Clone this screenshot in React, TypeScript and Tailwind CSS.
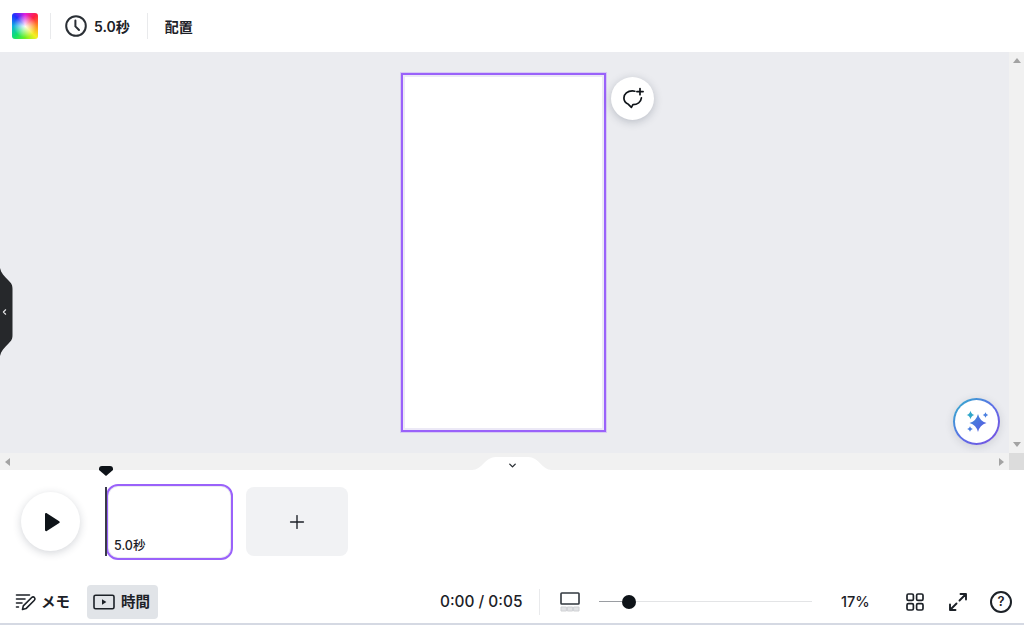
import { ChevronDown, ChevronLeft, Plus } from 'lucide-react';

const FONT = 'font-["Inter","Noto_Sans_CJK_JP",sans-serif]';

function ClockIcon() {
  return (
    <svg width="22" height="22" viewBox="0 0 22 22" fill="none" stroke="#2a2f35" strokeWidth="2" strokeLinecap="round" strokeLinejoin="round">
      <circle cx="11" cy="11" r="9.8" />
      <path d="M10.4 5.4v6l3.6 3.6" />
    </svg>
  );
}

function CommentPlusIcon() {
  return (
    <svg width="24" height="24" viewBox="0 0 24 24" fill="none" stroke="#0e1318" strokeWidth="1.7" strokeLinecap="round" strokeLinejoin="round">
      <path d="M13.8 4.2C13 4 12.2 3.9 11.4 3.9 6.6 3.9 2.9 6.8 2.9 11c0 3 1.9 5.2 4.5 6.3l3 3 1.5-2.6c4.4 0 8-2.6 8.5-6.9" />
      <path d="M19 1.5v6.2M15.9 4.6h6.2" />
    </svg>
  );
}

function SparkleIcon() {
  return (
    <svg width="26" height="26" viewBox="0 0 26 26">
      <defs>
        <linearGradient id="spark" x1="0" y1="0" x2="1" y2="1">
          <stop offset="0" stopColor="#3f8fd8" />
          <stop offset="1" stopColor="#5a55e4" />
        </linearGradient>
      </defs>
      <path fill="url(#spark)" d="M14 5Q15.6 12 22.5 14 15.6 16 14 23 12.4 16 5.5 14 12.4 12 14 5z" />
      <path fill="#2fa6c9" d="M6.5 1.8Q7.2 5.2 10.4 6 7.2 6.8 6.5 10.2 5.8 6.8 2.6 6 5.8 5.2 6.5 1.8z" />
      <path fill="#4a7fe0" d="M21.5 3.2Q22 5.5 24.2 6 22 6.5 21.5 8.8 21 6.5 18.8 6 21 5.5 21.5 3.2z" />
      <path fill="#4a7fe0" d="M6 17.2Q6.5 19.5 8.8 20 6.5 20.5 6 22.8 5.5 20.5 3.2 20 5.5 19.5 6 17.2z" />
    </svg>
  );
}

function NotesIcon() {
  return (
    <svg width="22" height="22" viewBox="0 0 22 22" fill="none" stroke="#1c2127" strokeWidth="1.6" strokeLinecap="round" strokeLinejoin="round">
      <path d="M1.5 4h13M1.5 8h8.5M1.5 12h5.5M1.5 16h2" />
      <path d="M7.5 18.5l.8-3.6 8.4-8.4c.8-.8 2-.8 2.7 0s.8 1.9 0 2.7l-8.4 8.4-3.5.9z" />
    </svg>
  );
}

function TimingIcon() {
  return (
    <svg width="22" height="16" viewBox="0 0 22 16" fill="none">
      <rect x="1" y="1.2" width="20" height="13.6" rx="1.6" stroke="#1c2127" strokeWidth="1.6" />
      <path d="M9 5.3v5.4l4.4-2.7z" fill="#1c2127" />
    </svg>
  );
}

function LayoutIcon() {
  return (
    <svg width="20" height="20" viewBox="0 0 20 20" fill="none">
      <rect x="1" y="1" width="18" height="11" rx="0.8" stroke="#32383f" strokeWidth="1.6" />
      <path d="M1 15h5.4v4H1zM7.4 15h5.2v4H7.4zM13.6 15H19v4h-5.4z" fill="#e3e4e6" stroke="#cfd1d4" strokeWidth="1" />
    </svg>
  );
}

function GridIcon() {
  return (
    <svg width="18" height="18" viewBox="0 0 18 18" fill="none" stroke="#1c2127" strokeWidth="1.7">
      <rect x="1" y="1" width="6.4" height="6.4" rx="1.4" />
      <rect x="10.6" y="1" width="6.4" height="6.4" rx="1.4" />
      <rect x="1" y="10.6" width="6.4" height="6.4" rx="1.4" />
      <rect x="10.6" y="10.6" width="6.4" height="6.4" rx="1.4" />
    </svg>
  );
}

function ExpandIcon() {
  return (
    <svg width="20" height="20" viewBox="0 0 20 20" fill="none" stroke="#1c2127" strokeWidth="1.9" strokeLinecap="round" strokeLinejoin="round">
      <path d="M11.5 8.5L18 2M12.5 2H18v5.5" />
      <path d="M8.5 11.5L2 18M7.5 18H2v-5.5" />
    </svg>
  );
}

function ScrollArrow({ className }: { className: string }) {
  return <div className={`h-0 w-0 ${className}`} />;
}

export default function App() {
  return (
    <div className={`flex h-[625px] w-[1024px] flex-col overflow-hidden bg-white text-[#1c2127] ${FONT}`}>
      {/* top bar */}
      <header className="flex h-[52px] shrink-0 items-center bg-white pl-3">
        <div className="relative h-[26px] w-[26px] overflow-hidden rounded-[3px] bg-[conic-gradient(from_315deg,#2030ff,#e020e0,#ff2040,#ff9020,#f4f020,#70f020,#10e070,#10b0e0,#2030ff)]">
          <div className="h-full w-full bg-[radial-gradient(circle_at_center,rgba(255,255,255,0.95)_0%,rgba(255,255,255,0)_62%)]" />
        </div>
        <div className="ml-[12px] h-[26px] w-px bg-[#e9eaec]" />
        <div className="ml-[14px] flex items-center gap-[7px]">
          <ClockIcon />
          <span className="text-[14px] font-semibold">5.0秒</span>
        </div>
        <div className="ml-[17px] h-[26px] w-px bg-[#e9eaec]" />
        <span className="ml-[17px] text-[14px] font-semibold">配置</span>
      </header>

      {/* canvas + scrollbars */}
      <div className="flex h-[418px] shrink-0">
        <div className="flex w-[1009px] flex-col">
          <main className="relative flex h-[401px] justify-center bg-[#ebecf0] pt-[21px]">
            <div className="mr-[3px] h-[359px] w-[205px] border-[2px] border-[#9a62fa] bg-white shadow-[0_0_0_1px_rgba(154,98,250,0.25),inset_0_0_0_2px_#ece9f6]" />
            <button className="absolute left-[611px] top-[25px] flex h-[43px] w-[43px] items-center justify-center rounded-full bg-white shadow-[0_2px_8px_rgba(40,50,70,0.25)]">
              <CommentPlusIcon />
            </button>
            <div className="absolute left-0 top-[216px] flex h-[88px] w-[13px] items-center justify-end pr-[4px]">
              <svg width="13" height="88" viewBox="0 0 13 88" className="absolute left-0 top-0">
                <path d="M0 0C1 5 4 8 9 13 11.5 15.5 12.5 17 12.5 21V67C12.5 71 11.5 72.5 9 75 4 80 1 83 0 88z" fill="#26282b" />
              </svg>
              <ChevronLeft size={10} strokeWidth={3} color="#e5e6e8" className="relative" />
            </div>
            <button className="absolute left-[953px] top-[346px] flex h-[47px] w-[47px] items-center justify-center rounded-full bg-[linear-gradient(135deg,#2fb5c9,#5b6fe6,#7b4fe0)] p-[2px] shadow-[0_2px_8px_rgba(40,50,70,0.15)]">
              <span className="flex h-full w-full items-center justify-center rounded-full bg-white">
                <SparkleIcon />
              </span>
            </button>
          </main>
          <div className="relative flex h-[17px] items-center justify-between bg-[#f1f1f1] px-[5px]">
            <ScrollArrow className="border-y-[4px] border-r-[5px] border-y-transparent border-r-[#a3a3a3]" />
            <ScrollArrow className="border-y-[4px] border-l-[5px] border-y-transparent border-l-[#a3a3a3]" />
            <div className="absolute bottom-0 left-[472px] flex h-[13px] w-[80px] items-start justify-center">
              <svg width="80" height="13" viewBox="0 0 80 13" className="absolute left-0 top-0">
                <path d="M0 13C10 13 13 0 24 0H56C67 0 70 13 80 13z" fill="#fff" />
              </svg>
              <ChevronDown size={11} strokeWidth={3} color="#2a2f35" className="relative mt-[3px]" />
            </div>
          </div>
        </div>
        <aside className="flex w-[15px] flex-col">
          <div className="flex h-[401px] flex-col items-center justify-between bg-[#f1f1f1] py-[6px]">
            <ScrollArrow className="border-x-[4px] border-b-[5px] border-x-transparent border-b-[#a3a3a3]" />
            <ScrollArrow className="border-x-[4px] border-t-[5px] border-x-transparent border-t-[#a3a3a3]" />
          </div>
          <div className="h-[17px] bg-[#dcdcdc]" />
        </aside>
      </div>

      {/* timeline */}
      <section className="relative flex h-[110px] shrink-0 items-start bg-white pl-[21px]">
        <div className="mt-[22px] flex h-[59px] w-[59px] items-center justify-center rounded-full bg-white shadow-[0_2px_8px_rgba(40,50,70,0.2)]">
          <svg width="18" height="20" viewBox="0 0 18 20" className="ml-[2px]">
            <path d="M2 2.2c0-.9 1-1.5 1.8-1l12.4 8c.7.4.7 1.4 0 1.8l-12.4 8c-.8.5-1.8-.1-1.8-1z" fill="#0e1318" />
          </svg>
        </div>
        <div className="relative ml-[26px] mt-[14px] flex h-[76px] w-[127px] items-end rounded-[12px] border-[2px] border-[#9a62fa] bg-white pb-[4px] pl-[6px] shadow-[inset_0_0_0_1px_#ebecf0]">
          <span className="text-[12.5px] font-medium leading-[16px]">5.0秒</span>
        </div>
        <button className="ml-[13px] mt-[17px] flex h-[69px] w-[102px] items-center justify-center rounded-[8px] bg-[#f1f2f4]">
          <Plus size={22} strokeWidth={1.5} color="#1c2127" />
        </button>
        {/* playhead */}
        <div className="absolute left-[105px] top-[17px] h-[69px] w-[2px] bg-[#3a3a4a]" />
        <div className="absolute left-[99px] top-[-4px] h-[10px] w-[14px] rounded-[3px] bg-[#0e1318] [clip-path:polygon(0_0,100%_0,100%_40%,50%_100%,0_40%)]" />
      </section>

      {/* footer */}
      <footer className="flex h-[45px] shrink-0 items-center border-b-[2px] border-[#d5d9e3] bg-white pl-[15px]">
        <div className="flex items-center gap-[4px]">
          <NotesIcon />
          <span className="text-[14.5px] font-semibold">メモ</span>
        </div>
        <div className="ml-[17px] flex h-[34px] w-[71px] items-center gap-[6px] rounded-[4px] bg-[#e1e4e8] pl-[6px]">
          <TimingIcon />
          <span className="text-[14.5px] font-semibold">時間</span>
        </div>
        <span className="ml-[282px] w-[83px] text-[15.4px] font-medium">0:00 / 0:05</span>
        <div className="ml-[16px] h-[26px] w-px bg-[#e9eaec]" />
        <div className="ml-[20px]">
          <LayoutIcon />
        </div>
        <div className="ml-[19px] flex w-[213px] items-center">
          <div className="h-[1.5px] w-[23px] bg-[#9a9da2]" />
          <div className="h-[14px] w-[14px] shrink-0 rounded-full bg-[#0e1318]" />
          <div className="h-[1.5px] flex-1 bg-[#e3e4e6]" />
        </div>
        <span className="ml-[29px] w-[31px] text-[14.5px] font-medium">17%</span>
        <div className="ml-[34px]">
          <GridIcon />
        </div>
        <div className="ml-[24px]">
          <ExpandIcon />
        </div>
        <div className="ml-[22px] flex h-[22px] w-[22px] items-center justify-center rounded-full border-[2px] border-[#1c2127] text-[13px] font-semibold">
          ?
        </div>
      </footer>
    </div>
  );
}
